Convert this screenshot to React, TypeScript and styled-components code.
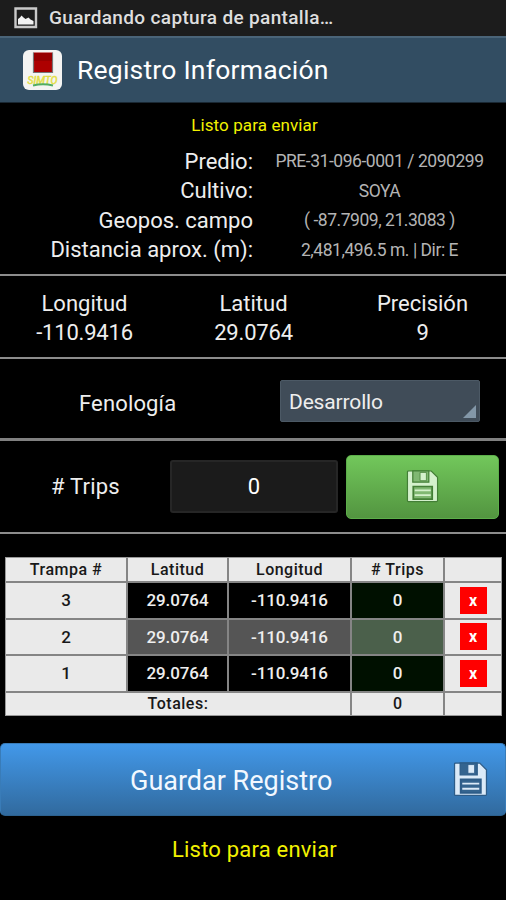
import React from "react";
import styled, { createGlobalStyle } from "styled-components";

const Global = createGlobalStyle`
  * { box-sizing: border-box; }
  html, body { margin: 0; background: #000; }
  body { font-family: Roboto, "Liberation Sans", sans-serif; color: #f0f0f0; }
`;

const Screen = styled.main`
  width: 506px;
  height: 900px;
  overflow: hidden;
  background: #000;
  display: flex;
  flex-direction: column;
`;

const Label = styled.span<{ $size: number; $spacing?: number; $color?: string; $weight?: number }>`
  font-size: ${(p) => p.$size}px;
  letter-spacing: ${(p) => p.$spacing ?? 0}px;
  color: ${(p) => p.$color ?? "#eee"};
  font-weight: ${(p) => p.$weight ?? 400};
  line-height: 1.2;
  white-space: nowrap;
`;

const StatusBar = styled.div`
  height: 36px;
  flex: none;
  display: flex;
  align-items: center;
  gap: 11px;
  padding: 0 14px;
  background: #1c1c1c;
`;

const TitleBar = styled.header`
  height: 67px;
  flex: none;
  display: flex;
  align-items: center;
  gap: 15px;
  padding: 0 23px;
  background: #324d62;
  border-top: 2px solid #4a6478;
  border-bottom: 1px solid #1a2833;
`;

const Notice = styled.div<{ $height: number; $inset?: number }>`
  height: ${(p) => p.$height}px;
  flex: none;
  display: flex;
  align-items: center;
  justify-content: center;
  padding: 2px 0 0 ${(p) => p.$inset ?? 3}px;
`;

const Details = styled.dl`
  margin: 0;
  height: 128px;
  flex: none;
  display: grid;
  grid-template-columns: 253px 253px;
  grid-auto-rows: 29.6px;
  padding-top: 1px;
`;

const Term = styled.dt`
  display: flex;
  align-items: center;
  justify-content: flex-end;
`;

const Value = styled.dd`
  margin: 0;
  display: flex;
  align-items: center;
  justify-content: center;
`;

const Rule = styled.hr<{ $thick?: boolean }>`
  margin: 0;
  border: 0;
  flex: none;
  width: 100%;
  height: ${(p) => (p.$thick ? 3 : 2)}px;
  background: ${(p) => (p.$thick ? "#808080" : "#8c8c8c")};
`;

const Coordinates = styled.section`
  height: 81px;
  flex: none;
  display: grid;
  grid-template-columns: 169px 169px 169px;
  padding-top: 15px;
`;

const Coordinate = styled.div`
  display: flex;
  flex-direction: column;
  align-items: center;
  gap: 3px;
`;

const FieldRow = styled.section<{ $height: number; $top?: number }>`
  height: ${(p) => p.$height}px;
  padding-top: ${(p) => p.$top ?? 0}px;
  flex: none;
  display: flex;
  align-items: center;
`;

const FieldName = styled.label<{ $width: number; $inset: number; $drop: number }>`
  width: ${(p) => p.$width}px;
  padding: ${(p) => p.$drop}px 0 0 ${(p) => p.$inset}px;
  flex: none;
`;

const Spinner = styled.button`
  width: 200px;
  height: 42px;
  padding: 0 3px 0 8px;
  border: 1px solid #4c5965;
  border-radius: 2px;
  background: #404c58;
  display: flex;
  align-items: center;
  justify-content: space-between;
  font-family: inherit;
`;

const SpinnerText = styled.span`
  padding-top: 5px;
`;

const Corner = styled.svg`
  align-self: flex-end;
  margin-bottom: 3px;
`;

const CountBox = styled.div`
  width: 168px;
  height: 53px;
  padding-top: 2px;
  border: 2px solid #262626;
  border-radius: 3px;
  background: #1b1b1b;
  display: flex;
  align-items: center;
  justify-content: center;
`;

const AddButton = styled.button`
  width: 153px;
  height: 64px;
  margin-left: 8px;
  padding: 0;
  border: 1px solid #5cae4a;
  border-radius: 5px;
  background: linear-gradient(#72c75b, #539540);
  display: flex;
  align-items: center;
  justify-content: center;
`;

const Grid = styled.table`
  flex: none;
  width: 497px;
  height: 158px;
  margin: 23px 0 0 5px;
  border-collapse: separate;
  border-spacing: 0;
  table-layout: fixed;
  background: #eaeaea;
  border: 1px solid #999;
`;

const Row = styled.tr<{ $height: number }>`
  height: ${(p) => p.$height}px;
`;

const Cell = styled.td<{ $bg?: string; $last?: boolean; $end?: boolean }>`
  padding: 0;
  height: inherit;
  line-height: 0;
  text-align: center;
  vertical-align: middle;
  background: ${(p) => p.$bg ?? "#eaeaea"};
  border-right: ${(p) => (p.$last ? "0" : "2px solid #858585")};
  border-bottom: ${(p) => (p.$end ? "0" : "2px solid #858585")};
`;

const Remove = styled.button`
  width: 27px;
  height: 27px;
  padding: 0;
  border: 0;
  background: #f00;
  font-family: inherit;
`;

const SaveButton = styled.button`
  width: 506px;
  height: 73px;
  flex: none;
  margin-top: 27px;
  padding: 0 17px 0 129px;
  border: 1px solid #397cb8;
  border-bottom-color: #2c618f;
  border-radius: 5px;
  background: linear-gradient(#4298e9, #316a9e);
  display: flex;
  align-items: center;
  justify-content: space-between;
  font-family: inherit;
`;

const SaveText = styled.span`
  padding-top: 3px;
`;

function Floppy({ size, fill, edge, panel }: { size: number; fill: string; edge: string; panel: string }) {
  return (
    <svg width={size} height={size} viewBox="0 0 34 34">
      <path
        d="M1.500 2q0-1 1-1H26l6.500 6.500v24q0 1-1 1h-29q-1 0-1-1z"
        fill={fill}
        stroke={edge}
        strokeWidth="1.200"
      />
      <path d="M7 1h16.500v11.500H7z" fill={panel} stroke={edge} strokeWidth="1.300" />
      <path d="M14.500 2.500h6.500v8.500h-6.500z" fill={fill} stroke={edge} strokeWidth=".8" />
      <path d="M7.500 17h19.500v13H7.500z" fill={panel} stroke={edge} strokeWidth="1.800" />
      <path d="M9 21h16.500M9 26h16.500" stroke={fill} strokeWidth="1.800" />
    </svg>
  );
}

function PictureIcon() {
  return (
    <svg width="24" height="22" viewBox="0 0 24 22">
      <path d="M1.500 1.500h20.500v18.500h-20.500z" fill="#1c1c1c" stroke="#c9c9c9" strokeWidth="2.400" />
      <path d="M4 17.500v-5.500l2-1.500 1.500-2 2 2 2 1.500 3-1.500 2 2 3 1.500v3.500z" fill="#f2f2f2" />
    </svg>
  );
}

function AppLogo() {
  return (
    <svg width="39" height="40" viewBox="0 0 39 40">
      <rect width="39" height="40" rx="6" fill="#f4f4f2" />
      <path d="M10.500 2.500v20h19v-20" fill="#ad0000" stroke="#777" strokeWidth="1.200" />
      <path d="M11 3h18v8h-18z" fill="#980000" />
      <text x="19.500" y="33.500" textAnchor="middle" textLength="30" lengthAdjust="spacingAndGlyphs" fontSize="10" fontStyle="italic" fill="#f3ee45" stroke="#dcd947" strokeWidth=".5">SIMTO</text>
      <path d="M10 35.500q10-2.500 20 0" fill="none" stroke="#51ad62" strokeWidth="2" />
    </svg>
  );
}

const details = [
  { term: "Predio:", value: "PRE-31-096-0001 / 2090299" },
  { term: "Cultivo:", value: "SOYA" },
  { term: "Geopos. campo", value: "( -87.7909, 21.3083 )" },
  { term: "Distancia aprox. (m):", value: "2,481,496.5 m. | Dir: E" },
];

const coordinates = [
  ["Longitud", "-110.9416"],
  ["Latitud", "29.0764"],
  ["Precisión", "9"],
];

const traps = [3, 2, 1];
const headings = ["Trampa #", "Latitud", "Longitud", "# Trips", ""];
const ink = "#181818";

export default function App() {
  return (
    <>
      <Global />
      <Screen>
        <StatusBar>
          <PictureIcon />
          <Label $size={19} $spacing={0.35} $weight={500} $color="#dedede">Guardando captura de pantalla…</Label>
        </StatusBar>
        <TitleBar>
          <AppLogo />
          <Label $size={26.5} $spacing={0.22} $color="#fff">Registro Información</Label>
        </TitleBar>
        <Notice $height={43}>
          <Label $size={17} $spacing={0.1} $color="#f2f200">Listo para enviar</Label>
        </Notice>
        <Details>
          {details.map((d) => (
            <React.Fragment key={d.term}>
              <Term><Label $size={22}>{d.term}</Label></Term>
              <Value><Label $size={17.5} $spacing={-0.46} $color="#b4b4b4">{d.value}</Label></Value>
            </React.Fragment>
          ))}
        </Details>
        <Rule />
        <Coordinates>
          {coordinates.map(([name, value]) => (
            <Coordinate key={name}>
              <Label $size={22}>{name}</Label>
              <Label $size={22} $spacing={-0.2}>{value}</Label>
            </Coordinate>
          ))}
        </Coordinates>
        <Rule />
        <FieldRow $height={79} $top={4}>
          <FieldName $width={280} $inset={79} $drop={8}><Label $size={22} $spacing={0.15}>Fenología</Label></FieldName>
          <Spinner>
            <SpinnerText><Label $size={21} $spacing={-0.15}>Desarrollo</Label></SpinnerText>
            <Corner width="13" height="13" viewBox="0 0 13 13"><path d="M13 0v13h-13z" fill="#8397a8" /></Corner>
          </Spinner>
        </FieldRow>
        <Rule $thick />
        <FieldRow $height={91}>
          <FieldName $width={170} $inset={51} $drop={2}><Label $size={22} $spacing={0.2}># Trips</Label></FieldName>
          <CountBox><Label $size={22} $color="#fff">0</Label></CountBox>
          <AddButton aria-label="Agregar"><Floppy size={33} fill="#d4f1cc" edge="#437f36" panel="#80b872" /></AddButton>
        </FieldRow>
        <Rule />
        <Grid>
          <colgroup>
            <col style={{ width: 122 }} /><col style={{ width: 101 }} /><col style={{ width: 123 }} /><col style={{ width: 93 }} /><col />
          </colgroup>
          <tbody>
            <Row $height={25}>
              {headings.map((h, i) => (
                <Cell key={i} $last={i === 4}><Label $size={16} $spacing={0.5} $weight={500} $color={ink}>{h}</Label></Cell>
              ))}
            </Row>
            {traps.map((n) => (
              <Row key={n} $height={36.67}>
                <Cell><Label $size={17} $weight={500} $color={ink}>{n}</Label></Cell>
                <Cell $bg={n === 2 ? "#555" : "#000"}><Label $size={17} $spacing={-0.1} $weight={500}>29.0764</Label></Cell>
                <Cell $bg={n === 2 ? "#555" : "#000"}><Label $size={17} $spacing={-0.15} $weight={500}>-110.9416</Label></Cell>
                <Cell $bg={n === 2 ? "#4b604b" : "#001000"}><Label $size={17} $weight={500}>0</Label></Cell>
                <Cell $last><Remove><Label $size={16} $weight={700} $color="#fff">x</Label></Remove></Cell>
              </Row>
            ))}
            <Row $height={22}>
              <Cell colSpan={3} $end><Label $size={16} $spacing={0.5} $weight={500} $color={ink}>Totales:</Label></Cell>
              <Cell $end><Label $size={16} $weight={500} $color={ink}>0</Label></Cell>
              <Cell $end $last />
            </Row>
          </tbody>
        </Grid>
        <SaveButton>
          <SaveText><Label $size={27} $color="#f2f8ff">Guardar Registro</Label></SaveText>
          <Floppy size={35} fill="#dbeaf8" edge="#2d5c88" panel="#34648f" />
        </SaveButton>
        <Notice $height={67}><Label $size={22} $spacing={0.2} $color="#f2f200">Listo para enviar</Label></Notice>
      </Screen>
    </>
  );
}
